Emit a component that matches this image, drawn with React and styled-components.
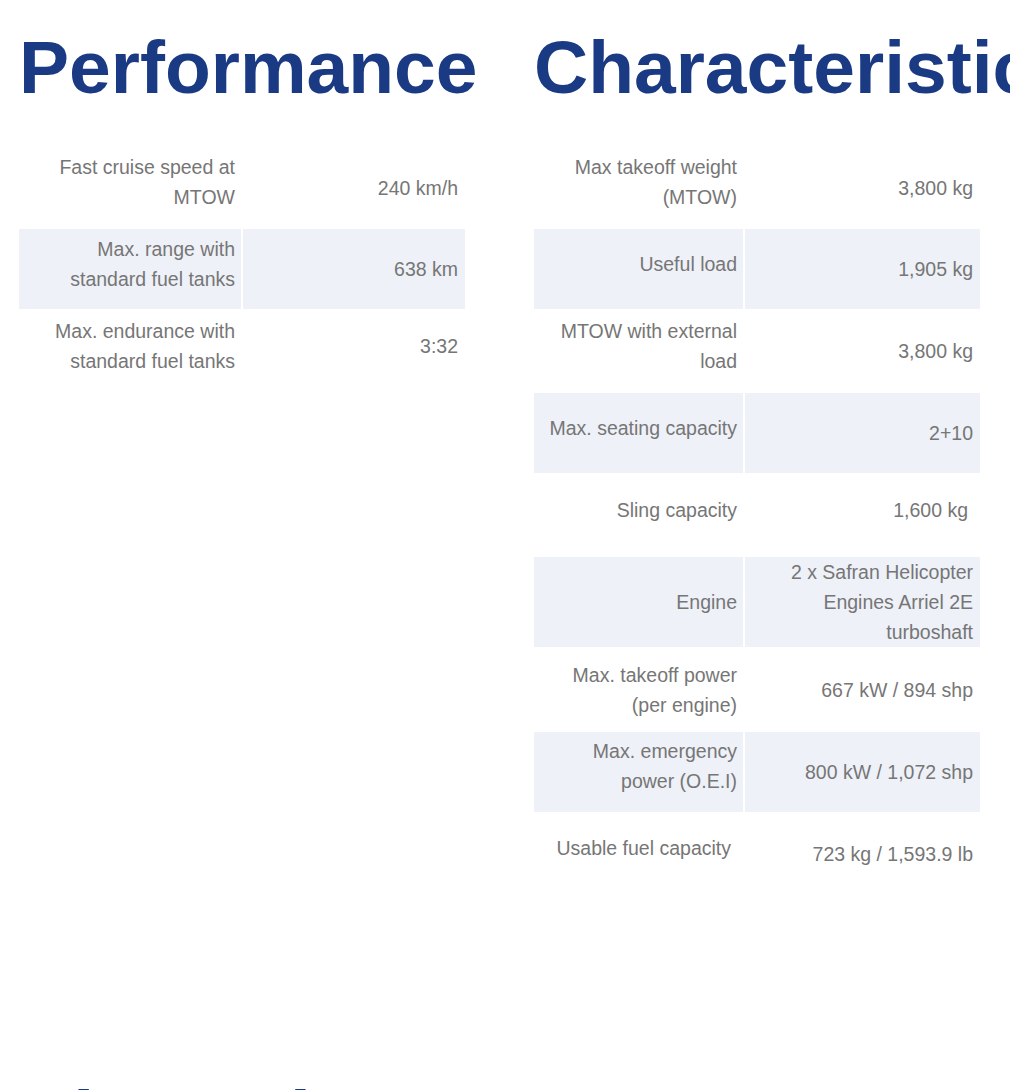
import React from 'react';
import styled, { createGlobalStyle } from 'styled-components';

const GlobalStyle = createGlobalStyle`
    html, body {
        margin: 0;
        padding: 0;
        background: #fff;
        overflow: hidden;
    }
    body {
        font-family: "Liberation Sans", Arial, sans-serif;
    }
`;

const Page = styled.div`
    display: grid;
    grid-template-columns: 446px 446px;
    align-items: start;
    column-gap: 69px;
    padding: 0 0 0 19px;
    width: 1010px;
    height: 1090px;
    box-sizing: border-box;
    overflow: hidden;
`;

const Section = styled.section`
    display: flex;
    flex-direction: column;
    min-width: 0;
`;

const Title = styled.h2`
    margin: 30px 0 41px 0;
    font-size: 75px;
    line-height: 75px;
    font-weight: 700;
    color: #1b3a84;
    white-space: nowrap;
`;

const Table = styled.div`
    display: flex;
    flex-direction: column;
`;

const Row = styled.div`
    display: grid;
    grid-template-columns: ${p => p.$cols};
    column-gap: 2px;
    height: ${p => p.$h}px;
`;

const Cell = styled.div`
    display: flex;
    align-items: center;
    justify-content: flex-end;
    text-align: right;
    box-sizing: border-box;
    padding: 0 ${p => p.$inset || 6}px ${p => (p.$lift || 0) * 2}px 0;
    background: ${p => (p.$shade ? '#eef1f8' : 'transparent')};
    color: #767676;
    font-size: 19.5px;
    line-height: 30px;
    font-weight: 400;
`;

const Footer = styled.div`
    grid-column: 1 / -1;
    margin-top: 154px;
`;

const performance = [
    { label: <>Fast cruise speed at<br />MTOW</>, value: '240 km/h', h: 83, lift: 6 },
    { label: <>Max. range with<br />standard fuel tanks</>, value: '638 km', h: 80, lift: 5 },
    { label: <>Max. endurance with<br />standard fuel tanks</>, value: '3:32', h: 84, lift: 5, vlift: 5 },
];

const characteristics = [
    { label: <>Max takeoff weight<br />(MTOW)</>, value: '3,800 kg', h: 83, lift: 6 },
    { label: 'Useful load', value: '1,905 kg', h: 80, lift: 5 },
    { label: <>MTOW with external<br />load</>, value: '3,800 kg', h: 84, lift: 5 },
    { label: 'Max. seating capacity', value: '2+10', h: 80, lift: 5 },
    { label: 'Sling capacity', value: '1,600 kg', h: 84, lift: 5, vlift: 5, vinset: 12 },
    { label: 'Engine', value: <>2 x Safran Helicopter<br />Engines Arriel 2E<br />turboshaft</>, h: 90 },
    { label: <>Max. takeoff power<br />(per engine)</>, value: '667 kW / 894 shp', h: 85 },
    { label: <>Max. emergency<br />power (O.E.I)</>, value: '800 kW / 1,072 shp', h: 80, lift: 6 },
    { label: 'Usable fuel capacity', value: '723 kg / 1,593.9 lb', h: 84, lift: 6, inset: 12 },
];

const SpecTable = ({ rows, cols }) => (
    <Table>
        {rows.map((r, i) => (
            <Row key={i} $cols={cols} $h={r.h}>
                <Cell $shade={i % 2 === 1} $lift={r.lift} $inset={r.inset}>
                    <span>{r.label}</span>
                </Cell>
                <Cell $shade={i % 2 === 1} $lift={r.vlift} $inset={r.vinset || 7}>
                    <span>{r.value}</span>
                </Cell>
            </Row>
        ))}
    </Table>
);

export default function App() {
    return (
        <>
            <GlobalStyle />
            <Page>
                <Section>
                    <Title>Performance</Title>
                    <SpecTable rows={performance} cols="222px 222px" />
                </Section>
                <Section>
                    <Title>Characteristics</Title>
                    <SpecTable rows={characteristics} cols="209px 235px" />
                </Section>
                <Footer>
                    <Title>Dimensions</Title>
                </Footer>
            </Page>
        </>
    );
}
